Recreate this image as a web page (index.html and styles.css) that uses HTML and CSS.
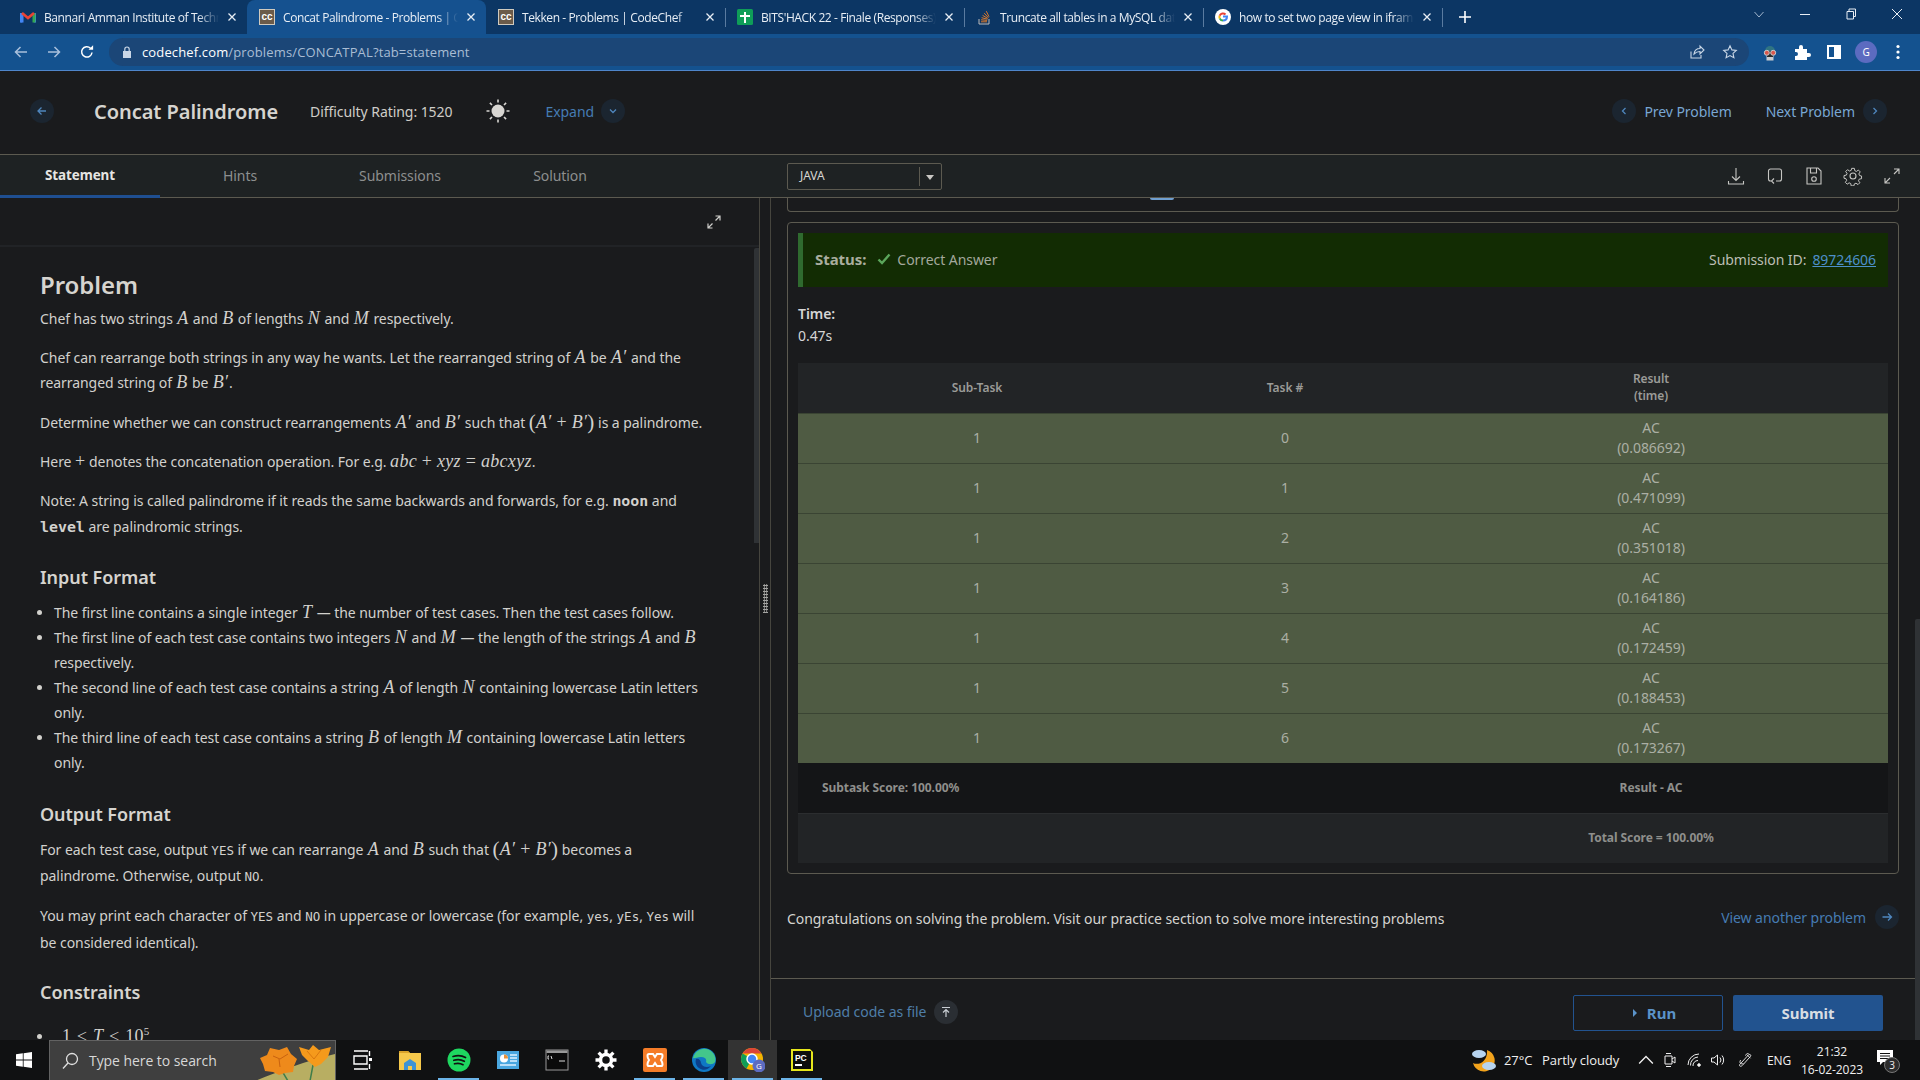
FILE: index.html
```html
<!DOCTYPE html>
<html lang="en">
<head>
<meta charset="utf-8">
<title>Concat Palindrome</title>
<link rel="stylesheet" href="styles.css">
</head>
<body>
<header class="tabstrip">
  <div class="tab"><svg class="fav" viewBox="0 0 16 16"><path d="M1 13.500V4M15 13.500V4" stroke="#4285f4" stroke-width="2.400"/><path d="M14 4v9.500" stroke="#34a853" stroke-width="3"/><path d="M2 13.500V4" stroke="#4285f4" stroke-width="3"/><path d="M2 4l6 5 6-5" stroke="#ea4335" stroke-width="2.600" fill="none"/></svg><span class="tab-title">Bannari Amman Institute of Technology</span><svg class="close" viewBox="0 0 10 10"><path d="M1.5 1.5l7 7M8.500 1.500l-7 7"/></svg></div>
  <div class="tab active"><span class="fav cc">cc</span><span class="tab-title">Concat Palindrome - Problems | CodeChef</span><svg class="close" viewBox="0 0 10 10"><path d="M1.5 1.5l7 7M8.500 1.500l-7 7"/></svg></div>
  <div class="tab sep"><span class="fav cc">cc</span><span class="tab-title">Tekken - Problems | CodeChef</span><svg class="close" viewBox="0 0 10 10"><path d="M1.5 1.5l7 7M8.500 1.500l-7 7"/></svg></div>
  <div class="tab sep"><svg class="fav" viewBox="0 0 16 16"><rect width="16" height="16" rx="1.500" fill="#0f9d58"/><path d="M7 3h2v3h4v2H9v6H7V8H3V6h4z" fill="#fff"/></svg><span class="tab-title">BITS'HACK 22 - Finale (Responses)</span><svg class="close" viewBox="0 0 10 10"><path d="M1.5 1.5l7 7M8.500 1.500l-7 7"/></svg></div>
  <div class="tab sep"><svg class="fav" viewBox="0 0 16 16"><path d="M3 10v5h10v-5" fill="none" stroke="#bcbbbb"/><path d="M5 12.800h6M5.100 10.800l6 .6M5.600 8.700l5.800 1.500M6.600 6.400l5.200 3M8.200 4.200l4.200 4.400M10.300 2.200l2.700 5.500" stroke="#f48024" stroke-width=".9" fill="none"/></svg><span class="tab-title">Truncate all tables in a MySQL database</span><svg class="close" viewBox="0 0 10 10"><path d="M1.5 1.5l7 7M8.500 1.500l-7 7"/></svg></div>
  <div class="tab sep"><svg class="fav" viewBox="0 0 16 16"><circle cx="8" cy="8" r="8" fill="#fff"/><path d="M8 7.500h4c0 2.400-1.700 4-4 4" fill="none" stroke="#4285f4" stroke-width="2"/><path d="M8 11.500A3.600 3.600 0 0 1 4.700 9.300" fill="none" stroke="#34a853" stroke-width="2"/><path d="M4.700 9.400a3.600 3.600 0 0 1 0-2.800" fill="none" stroke="#fbbc04" stroke-width="2"/><path d="M4.700 6.700A3.600 3.600 0 0 1 10.500 5.400" fill="none" stroke="#ea4335" stroke-width="2"/></svg><span class="tab-title">how to set two page view in iframe</span><svg class="close" viewBox="0 0 10 10"><path d="M1.5 1.5l7 7M8.500 1.500l-7 7"/></svg></div>
  <div class="newtab sep"><svg viewBox="0 0 14 14"><path d="M7 1v12M1 7h12"/></svg></div>
  <div class="winctl">
    <svg class="wc wc-s" viewBox="0 0 12 12"><path d="M1.500 4L6 9l4.500-5"/></svg>
    <svg class="wc" viewBox="0 0 12 12"><path d="M1 6.500h10"/></svg>
    <svg class="wc" viewBox="0 0 12 12"><path d="M2 3.500h6.500V11H2zM4 3.500V1h6.500v7.500H8.500"/></svg>
    <svg class="wc" viewBox="0 0 12 12"><path d="M1 1l10 10M11 1L1 11"/></svg>
  </div>
</header>
<nav class="toolbar">
  <svg class="tb tb-dim" viewBox="0 0 16 16"><path d="M14 8H2.500M7.500 3l-5 5 5 5"/></svg>
  <svg class="tb tb-dim" viewBox="0 0 16 16"><path d="M2 8h11.500M8.500 3l5 5-5 5"/></svg>
  <svg class="tb" viewBox="0 0 16 16"><path d="M13 8.500A5.200 5.200 0 1 1 11.500 4.200"/><path class="fill" d="M9.500 5.800h4.600V1.200z"/></svg>
  <div class="omnibox">
    <svg class="lock" viewBox="0 0 10 12"><path d="M1 5h8v7H1z" fill="#c9d6e6"/><path d="M2.800 5V3.200a2.200 2.200 0 0 1 4.400 0V5" fill="none" stroke="#c9d6e6" stroke-width="1.200"/></svg>
    <span class="url"><b>codechef.com</b>/problems/CONCATPAL?tab=statement</span>
    <span class="omni-icons">
      <svg class="tb tb-sm" viewBox="0 0 16 16"><path d="M2 7.500V14h10v-3"/><path d="M5 10c.5-3.500 3-5.500 6-5.500V2l4 4-4 4V7.500C8.500 7.500 6.500 8.500 5 10z"/></svg>
      <svg class="tb tb-sm" viewBox="0 0 16 16"><path d="M8 1.800l1.900 4.100 4.400.5-3.300 3 .9 4.400L8 11.600l-3.900 2.200.9-4.400-3.300-3 4.400-.5z"/></svg>
    </span>
  </div>
  <div class="ext-icons">
    <svg class="ext" viewBox="0 0 18 18"><path d="M4 8a5 5 0 0 1 10 0z" fill="#2f7482"/><rect x="5.500" y="13" width="7" height="4.500" fill="#c9ccd0"/><rect x="6" y="8" width="6" height="6" fill="#2a2a2a"/><circle cx="5.800" cy="9.800" r="2.500" fill="#d9574c" stroke="#c8ccd0"/><circle cx="12.200" cy="9.800" r="2.500" fill="#d9574c" stroke="#c8ccd0"/></svg>
    <svg class="ext" viewBox="0 0 18 18"><path fill="#fff" d="M2 6h4V4a2 2 0 0 1 4 0v2h4v4h2a2 2 0 0 1 0 4h-2v3H2v-4h1a2 2 0 0 0 0-4H2z"/></svg>
    <svg class="ext" viewBox="0 0 18 18"><path fill="#fff" d="M2 2h14v14H2zm2 2v10h5V4z"/></svg>
    <span class="avatar">G</span>
    <svg class="ext" viewBox="0 0 18 18"><circle cx="9" cy="3.500" r="1.600" fill="#fff"/><circle cx="9" cy="9" r="1.600" fill="#fff"/><circle cx="9" cy="14.500" r="1.600" fill="#fff"/></svg>
  </div>
</nav>
<section class="pagehead">
  <span class="roundbtn back"><svg viewBox="0 0 12 12"><path d="M10 6H2M5.500 2.500L2 6l3.500 3.500"/></svg></span>
  <h1 class="title">Concat Palindrome</h1>
  <span class="rating">Difficulty Rating: 1520</span>
  <svg class="sun" viewBox="0 0 24 24"><circle cx="12" cy="12" r="6.500" fill="#d8d6d2"/><path d="M12 .5v3M12 20.500v3M.5 12h3M20.500 12h3M3.900 3.900L6 6M18 18l2.100 2.100M3.900 20.100L6 18M18 6l2.100-2.100" stroke="#d8d6d2" stroke-width="1.600"/></svg>
  <span class="link expand">Expand</span>
  <span class="roundbtn"><svg viewBox="0 0 12 12"><path d="M3 4.500L6 7.500 9 4.500"/></svg></span>
  <div class="pager">
    <span class="roundbtn"><svg viewBox="0 0 12 12"><path d="M7.500 3L4.500 6l3 3"/></svg></span>
    <span class="pager-link">Prev Problem</span>
    <span class="pager-link next">Next Problem</span>
    <span class="roundbtn"><svg viewBox="0 0 12 12"><path d="M4.500 3l3 3-3 3"/></svg></span>
  </div>
</section>
<section class="subnav">
  <div class="subtabs">
    <span class="subtab current">Statement</span>
    <span class="subtab">Hints</span>
    <span class="subtab">Submissions</span>
    <span class="subtab">Solution</span>
  </div>
  <div class="langselect"><span class="lang">JAVA</span><span class="caret"></span></div>
  <div class="editor-icons">
    <svg viewBox="0 0 20 20"><path d="M10 2v12M6 10.500l4 4 4-4M2.500 15v3h15v-3"/></svg>
    <svg viewBox="0 0 20 20"><path d="M11 15h3.500a2 2 0 0 0 2-2V5a2 2 0 0 0-2-2h-9a2 2 0 0 0-2 2v8a2 2 0 0 0 2 2h1M9 12.500L6.500 15 9 17.500"/></svg>
    <svg viewBox="0 0 20 20"><path d="M3 2h11l3 3v13H3zM6.500 2v5h6V2"/><circle cx="10" cy="13" r="2.300"/></svg>
    <svg viewBox="0 0 20 20"><circle cx="10" cy="10" r="3"/><path d="M8.500 1.500h3l.5 2.600 1.800.8 2.200-1.500 2 2-1.500 2.300.8 1.800 2.200.500v3l-2.600.5-.8 1.800 1.500 2.200-2 2-2.300-1.500-1.800.8-.5 2.200h-3l-.5-2.600-1.800-.8-2.200 1.500-2-2 1.500-2.300-.8-1.800-2.200-.5v-3l2.600-.5.8-1.800-1.500-2.200 2-2 2.300 1.500 1.800-.8z" transform="translate(1 1) scale(.9)"/></svg>
    <svg viewBox="0 0 20 20"><path d="M12 3h5v5M17 3l-5 5M8 17H3v-5M3 17l5-5"/></svg>
  </div>
</section>
<main class="workspace">
  <article class="statement">
    <div class="statement-head"><svg class="expand-mini" viewBox="0 0 16 16"><path d="M9.500 2H14v4.500M14 2L9.500 6.500M6.500 14H2V9.500M2 14l4.500-4.500"/></svg></div>
    <div class="statement-body">
      <h2>Problem</h2>
      <p>Chef has two strings <i class="m">A</i> and <i class="m">B</i> of lengths <i class="m">N</i> and <i class="m">M</i> respectively.</p>
      <p>Chef can rearrange both strings in any way he wants. Let the rearranged string of <i class="m">A</i> be <i class="m">A′</i> and the rearranged string of <i class="m">B</i> be <i class="m">B′</i>.</p>
      <p>Determine whether we can construct rearrangements <i class="m">A′</i> and <i class="m">B′</i> such that <span class="m"><span class="paren">(</span><i>A′</i> + <i>B′</i><span class="paren">)</span></span> is a palindrome.</p>
      <p>Here <span class="m">+</span> denotes the concatenation operation. For e.g. <span class="m"><i>abc</i> + <i>xyz</i> = <i>abcxyz</i></span>.</p>
      <p>Note: A string is called palindrome if it reads the same backwards and forwards, for e.g. <code class="strong">noon</code> and <code class="strong">level</code> are palindromic strings.</p>
      <h3>Input Format</h3>
      <ul>
        <li>The first line contains a single integer <i class="m">T</i> — the number of test cases. Then the test cases follow.</li>
        <li>The first line of each test case contains two integers <i class="m">N</i> and <i class="m">M</i> — the length of the strings <i class="m">A</i> and <i class="m">B</i> respectively.</li>
        <li>The second line of each test case contains a string <i class="m">A</i> of length <i class="m">N</i> containing lowercase Latin letters only.</li>
        <li>The third line of each test case contains a string <i class="m">B</i> of length <i class="m">M</i> containing lowercase Latin letters only.</li>
      </ul>
      <h3>Output Format</h3>
      <p>For each test case, output <code>YES</code> if we can rearrange <i class="m">A</i> and <i class="m">B</i> such that <span class="m"><span class="paren">(</span><i>A′</i> + <i>B′</i><span class="paren">)</span></span> becomes a palindrome. Otherwise, output <code>NO</code>.</p>
      <p>You may print each character of <code>YES</code> and <code>NO</code> in uppercase or lowercase (for example, <code>yes</code>, <code>yEs</code>, <code>Yes</code> will be considered identical).</p>
      <h3>Constraints</h3>
      <ul class="limits">
        <li><span class="m ineq">1 ≤ <i>T</i> ≤ 10<sup>5</sup></span></li>
      </ul>
    </div>
    <span class="v-thumb left-thumb"></span>
  </article>
  <div class="divider"><span class="grip"></span></div>
  <section class="results-pane">
    <div class="results">
      <div class="prev-card"><span class="prev-dot"></span></div>
      <div class="card">
        <div class="status">
          <span class="status-label">Status:</span>
          <svg class="check" viewBox="0 0 14 12"><path d="M1.500 6.500l3.500 3.500 7.500-8.500"/></svg>
          <span class="status-value">Correct Answer</span>
          <span class="subid">Submission ID:<a href="#">89724606</a></span>
        </div>
        <div class="time"><strong>Time:</strong><span>0.47s</span></div>
        <table class="subtasks">
          <colgroup><col class="c1"><col class="c2"><col class="c3"></colgroup>
          <thead><tr><th>Sub-Task</th><th>Task #</th><th>Result<br>(time)</th></tr></thead>
          <tbody>
            <tr><td>1</td><td>0</td><td>AC<br>(0.086692)</td></tr>
            <tr><td>1</td><td>1</td><td>AC<br>(0.471099)</td></tr>
            <tr><td>1</td><td>2</td><td>AC<br>(0.351018)</td></tr>
            <tr><td>1</td><td>3</td><td>AC<br>(0.164186)</td></tr>
            <tr><td>1</td><td>4</td><td>AC<br>(0.172459)</td></tr>
            <tr><td>1</td><td>5</td><td>AC<br>(0.188453)</td></tr>
            <tr><td>1</td><td>6</td><td>AC<br>(0.173267)</td></tr>
          </tbody>
          <tfoot>
            <tr class="subscore"><td colspan="2">Subtask Score: 100.00%</td><td>Result - AC</td></tr>
            <tr class="total"><td colspan="2"></td><td>Total Score = 100.00%</td></tr>
          </tfoot>
        </table>
      </div>
      <div class="congrats">
        <span>Congratulations on solving the problem. Visit our practice section to solve more interesting problems</span>
        <span class="another"><span class="link">View another problem</span><span class="roundbtn"><svg viewBox="0 0 12 12"><path d="M1.500 6h9M7 2.500L10.500 6 7 9.500"/></svg></span></span>
      </div>
    </div>
    <div class="actionbar">
      <span class="link upload">Upload code as file</span>
      <span class="roundbtn up"><svg viewBox="0 0 12 12"><path d="M2 1.500h8M6 11V3.500M3 6.500l3-3 3 3"/></svg></span>
      <button class="btn run"><svg viewBox="0 0 6 10"><path d="M1 1l4 4-4 4z"/></svg>Run</button>
      <button class="btn submit">Submit</button>
    </div>
    <span class="v-thumb right-thumb"></span>
  </section>
</main>
<footer class="taskbar">
  <div class="startbtn"><svg viewBox="0 0 16 16"><path fill="#fff" d="M0 2.300l6.800-1v6.300H0zM7.600 1.200L16 0v7.600H7.600zM0 8.400h6.800v6.300L0 13.700zM7.600 8.400H16V16l-8.400-1.200z"/></svg></div>
  <div class="searchbox">
    <svg class="mag" viewBox="0 0 18 18"><circle cx="11" cy="7" r="5.500"/><path d="M7 11l-5 5.500"/></svg>
    <span>Type here to search</span>
    <svg class="poppy" viewBox="0 0 80 40"><path d="M0 40c20-8 50-20 80-27v27z" fill="#b8ae62"/><path d="M27 30l6 10M58 24l-3 16" stroke="#3f7d4a" stroke-width="1.500"/><path d="M5 17l7-3 3-7 9 2 8-3 4 7 6 5-3 7-1 6-8 1-6 2-6-3-8-1-2-7z" fill="#ee8a1b"/><path d="M18 15l7 3 8-5M24 18l1 8" stroke="#c9620f" fill="none"/><path d="M44 6l10 3 4-5 6 5 12-3-3 10-7 7-6 3-7-6-6-6z" fill="#f59a1c"/><path d="M52 10l7 8 7-9" stroke="#d9770f" fill="none"/></svg>
  </div>
  <div class="task"><svg viewBox="0 0 24 24"><path d="M5 3h14M5 21h14M5 8h13v8H5zM20.500 3v5M20.500 16v5" fill="none" stroke="#fff" stroke-width="1.400"/><rect x="20" y="10" width="3" height="3" fill="#fff"/></svg></div>
  <div class="task"><svg viewBox="0 0 24 24"><path d="M1 3h9l2 2h11v17H1z" fill="#f5c84b"/><path d="M1 3h9l2 2H1z" fill="#d9a32a"/><path d="M6 22v-7l6-4 6 4v7h-4v-4h-4v4z" fill="#3e93d3"/></svg></div>
  <div class="task on"><svg viewBox="0 0 24 24"><circle cx="12" cy="12" r="11.500" fill="#1ed760"/><path d="M6 8.500c4-1.200 9-1 12.500 1M6.800 12.300c3.500-1 7.500-.7 10.500 1M7.500 15.800c3-.8 6-.6 8.500.9" stroke="#111" stroke-width="1.700" fill="none" stroke-linecap="round"/></svg></div>
  <div class="task"><svg viewBox="0 0 24 24"><rect x="1" y="3" width="22" height="18" fill="#4aa7e0"/><circle cx="8" cy="10.500" r="4" fill="#fff"/><path d="M8 10.500V6.500a4 4 0 0 1 4 4z" fill="#e8913a"/><path d="M14 7h7M14 10h7M14 13h7M4 17h16" stroke="#dff2ff" stroke-width="1.500"/></svg></div>
  <div class="task"><svg viewBox="0 0 24 24"><rect x="1" y="2" width="22" height="20" fill="#0b0b0b" stroke="#999"/><rect x="1.500" y="2.500" width="21" height="2.500" fill="#999"/><path d="M4 8H3v3h1M6 8l1 3M14 13h6" stroke="#ddd" fill="none"/></svg></div>
  <div class="task"><svg viewBox="0 0 24 24"><circle cx="12" cy="12" r="5.500" fill="none" stroke="#fff" stroke-width="3.500"/><path d="M12 1.500v4M12 18.500v4M1.500 12h4M18.500 12h4M4.600 4.600l2.800 2.800M16.600 16.600l2.800 2.800M4.600 19.400l2.800-2.800M16.600 7.400l2.800-2.800" stroke="#fff" stroke-width="3.300"/></svg></div>
  <div class="task on"><svg viewBox="0 0 24 24"><rect width="24" height="24" rx="2" fill="#f57c28"/><path d="M6 6h4l2 3 2-3h4c2 0 2 3 0 6 2 3 2 6 0 6h-4l-2-3-2 3H6c-2 0-2-3 0-6-2-3-2-6 0-6z" fill="none" stroke="#fff" stroke-width="2"/></svg></div>
  <div class="task on"><svg viewBox="0 0 24 24"><circle cx="12" cy="12" r="12" fill="#0f78c4"/><path d="M1 10C3 2 12-2 19 3c4 3 5 8 4 11-2 3-7 3-9 0 1-3-1-5-5-5-4 0-7 2-8 1z" fill="#43c68b"/><path d="M9 15c1 4 6 5 10 3-3 4-8 5-12 2-3-2-4-6-3-9 2-1 5 1 5 4z" fill="#0b3f8a"/></svg></div>
  <div class="task on active"><svg viewBox="0 0 24 24"><circle cx="11" cy="11" r="11" fill="#f4b400"/><path d="M11 11L5.500 20.500A11 11 0 0 1 1.500 5.500z" fill="#0f9d58"/><path d="M1.500 5.500A11 11 0 0 1 20.500 5.500H11z" fill="#db4437"/><circle cx="11" cy="11" r="5" fill="#4285f4" stroke="#fff" stroke-width="1.500"/><circle cx="18" cy="18" r="6.500" fill="#5c6bc0"/><text x="18" y="21" font-size="8" fill="#fff" text-anchor="middle" font-family="Open Sans">G</text></svg></div>
  <div class="task on"><svg viewBox="0 0 24 24"><path d="M1 1h19l3 3v19H1z" fill="#e6e61c"/><rect x="3" y="3" width="18" height="18" fill="#0d0d0d"/><rect x="5" y="16" width="7" height="2" fill="#fff"/><text x="5" y="13" font-size="8.500" font-weight="700" fill="#fff" font-family="Liberation Sans">PC</text></svg></div>
  <div class="tray">
    <svg class="weather" viewBox="0 0 26 26"><path d="M16 3a11 11 0 1 1-14 13c6 3 15-2 14-13z" fill="#f2a31c"/><ellipse cx="8" cy="7" rx="7" ry="4" fill="#b7d4ef"/><ellipse cx="18" cy="19" rx="7" ry="4" fill="#b7d4ef"/></svg>
    <span class="temp">27°C</span>
    <span class="sky">Partly cloudy</span>
    <svg class="ti chev" viewBox="0 0 14 14"><path d="M1 10l6-6 6 6"/></svg>
    <svg class="ti" viewBox="0 0 16 16"><path d="M3 4h7v8H3zM10 7l3-2v6l-3-2M4 1.500h5M4 14.500h5"/></svg>
    <svg class="ti" viewBox="0 0 16 16"><path d="M2 13a11 11 0 0 1 11-11M4.500 13.500A8 8 0 0 1 12 5M7 14a5 5 0 0 1 5-5.500"/><circle cx="13" cy="13" r="1.300" fill="#fff"/></svg>
    <svg class="ti" viewBox="0 0 16 16"><path d="M1.500 6v4h2.500l3.500 3V3L4 6zM10 5.500a4 4 0 0 1 0 5M12 3.500a7 7 0 0 1 0 9"/></svg>
    <svg class="ti pen" viewBox="0 0 18 18"><path d="M2 14c-1 2 1 3 3 1L14 5c1-1 0-3-2-2zM10 3l4 4M8 4c2-2 3-3 4-2M3 9c-2 3 0 5 3 4"/></svg>
    <span class="eng">ENG</span>
    <span class="clock">21:32<br>16-02-2023</span>
    <span class="notif"><svg viewBox="0 0 18 18"><path fill="#fff" d="M1 1h16v12H7l-3 3v-3H1z"/><path d="M4 4.500h10M4 7h10M4 9.500h8" stroke="#111" stroke-width="1"/></svg><b>3</b></span>
  </div>
</footer>
</body>
</html>
```

FILE: styles.css
```css
* { box-sizing: border-box; }
html, body { height: 100%; }
body {
  margin: 0;
  width: 1920px;
  height: 1080px;
  overflow: hidden;
  display: flex;
  flex-direction: column;
  background: #1a1b1d;
  color: #d2d1cd;
  font-family: "Noto Sans", "Open Sans", sans-serif;
  font-size: 14px;
  letter-spacing: -0.06px;
}
svg { display: block; flex: none; }

/* Browser chrome */
.tabstrip {
  height: 34px;
  flex: none;
  display: flex;
  padding-left: 8px;
  background: #0c3664;
  font-family: "Open Sans", sans-serif;
  font-size: 12px;
  letter-spacing: -0.4px;
  color: #e8eef5;
}
.tab {
  width: 239px;
  flex: none;
  display: flex;
  align-items: center;
  padding: 0 10px 0 12px;
  gap: 8px;
  position: relative;
}
.tab.sep::before, .newtab.sep::before {
  content: "";
  position: absolute;
  left: 0;
  top: 8px;
  height: 19px;
  width: 1px;
  background: #5a7ba0;
}
.tab.active + .tab.sep::before { display: none; }
.tab.active { background: #15518f; border-radius: 8px 8px 0 0; }
.fav { width: 16px; height: 16px; flex: none; }
.cc {
  background: #6b5b4a;
  color: #fff;
  font: 700 10px/15px "Liberation Sans", sans-serif;
  letter-spacing: 0;
  text-align: center;
  outline: 1px solid #cfcabf;
  outline-offset: -1px;
}
.tab-title {
  flex: 1;
  white-space: nowrap;
  overflow: hidden;
  -webkit-mask-image: linear-gradient(to right, #000 88%, transparent);
  mask-image: linear-gradient(to right, #000 88%, transparent);
}
.close { width: 10px; height: 10px; stroke: #e8eef5; stroke-width: 1.3; fill: none; }
.newtab {
  position: relative;
  width: 46px;
  display: flex;
  align-items: center;
  justify-content: center;
}
.newtab svg { width: 14px; height: 14px; stroke: #fff; stroke-width: 1.6; fill: none; }
.winctl { margin-left: auto; display: flex; padding: 8px 17px 0 0; gap: 34px; }
.wc { width: 12px; height: 12px; stroke: #e8eef5; fill: none; }
.wc-s { stroke: #9fb4cc; }

.toolbar {
  height: 37px;
  flex: none;
  display: flex;
  align-items: center;
  background: #14528f;
  border-bottom: 1px solid #4f86cb;
  padding: 0 0 1px 13px;
  gap: 17px;
}
.tb { width: 16px; height: 16px; fill: none; stroke: #fff; stroke-width: 1.5; }
.tb .fill { fill: #fff; stroke: none; }
.tb-dim { stroke: #a9c0dc; }
.tb-sm { stroke: #c8d6e6; stroke-width: 1.1; }
.omnibox {
  margin-left: -3px;
  width: 1640px;
  height: 28px;
  flex: none;
  display: flex;
  align-items: center;
  background: #1b4677;
  border-radius: 14px;
  padding: 0 11px 0 13px;
  font-family: "Open Sans", sans-serif;
  font-size: 13px;
  letter-spacing: 0.14px;
  color: #a9bdd4;
}
.lock { width: 10px; height: 12px; margin-right: 10px; }
.url b { font-weight: 400; color: #fff; }
.omni-icons { margin-left: auto; display: flex; gap: 17px; }
.ext-icons { display: flex; align-items: center; gap: 14px; margin-left: -5px; }
.ext { width: 18px; height: 18px; }
.avatar {
  width: 22px;
  height: 22px;
  border-radius: 50%;
  background: #5c6bc0;
  color: #fff;
  font-size: 10px;
  line-height: 22px;
  text-align: center;
  margin: 0 -2px;
}

/* Problem header */
.pagehead {
  height: 84px;
  flex: none;
  display: flex;
  align-items: center;
  padding: 0 33px 3px 30px;
  border-bottom: 1px solid #5c5a50;
}
.roundbtn {
  width: 24px;
  height: 24px;
  flex: none;
  border-radius: 50%;
  background: #1b2530;
  display: flex;
  align-items: center;
  justify-content: center;
}
.roundbtn svg { width: 12px; height: 12px; fill: none; stroke: #4f86bd; stroke-width: 1.3; }
.title { margin: 0 32px 0 40px; font-size: 20px; font-weight: 600; color: #d6d4cf; }
.rating { color: #cfcdc8; }
.sun { width: 24px; height: 24px; margin: 0 35px 0 34px; }
.link { color: #467cb3; }
.expand { margin-right: 7px; }
.pager { margin-left: auto; display: flex; align-items: center; color: #79a7d3; }
.pager-link { margin-left: 8px; }
.pager-link.next { margin: 0 8px 0 34px; }

.subnav {
  height: 43px;
  flex: none;
  display: flex;
  align-items: center;
  background: #1e2223;
  border-bottom: 1px solid #5c5a50;
}
.subtabs { display: flex; align-self: stretch; width: 787px; }
.subtab {
  width: 160px;
  display: flex;
  align-items: center;
  justify-content: center;
  color: #8d8f8f;
  font-size: 14px;
  padding-bottom: 1px;
}
.subtab.current {
  color: #e6e5e2;
  font-size: 13.400px;
  font-weight: 700;
  padding-bottom: 1px;
  margin-bottom: -1px;
  border-bottom: 3px solid #1f4f91;
}
.langselect {
  width: 155px;
  height: 27px;
  border: 1px solid #5c5a50;
  border-radius: 2px;
  display: flex;
  align-items: center;
  padding: 0 0 2px 12px;
  font-size: 12px;
  color: #d6d5d1;
  position: relative;
}
.caret {
  position: absolute;
  right: 1px;
  top: 3px;
  bottom: 3px;
  width: 21px;
  border-left: 1px solid #5c5a50;
}
.caret::after {
  content: "";
  position: absolute;
  left: 6px;
  top: 8px;
  border: 4px solid transparent;
  border-top: 5px solid #c9c8c4;
  border-bottom: 0;
}
.editor-icons { margin-left: auto; display: flex; gap: 19px; padding-right: 18px; }
.editor-icons svg { width: 20px; height: 20px; fill: none; stroke: #c6c6c3; stroke-width: 1.1; }

/* Work area */
.workspace { flex: 1; min-height: 0; display: flex; }
.statement {
  width: 760px;
  flex: none;
  position: relative;
  overflow: hidden;
  border-right: 1px solid #46453e;
}
.statement-head {
  height: 49px;
  display: flex;
  justify-content: flex-end;
  padding: 16px 37px 0 0;
  border-bottom: 2px solid #212326;
}
.expand-mini { width: 16px; height: 16px; fill: none; stroke: #cfcfcc; stroke-width: 1.2; }
.statement-body { padding: 21px 54px 0 40px; line-height: 25.2px; }
.statement-body h2 { margin: 0 0 4px; font-size: 24px; line-height: 34px; font-weight: 600; color: #d6d4cf; }
.statement-body h3 { margin: 25px 0 11px; font-size: 18px; line-height: 24px; font-weight: 600; color: #d6d4cf; }
.statement-body p { margin: 0 0 14px; }
.statement-body ul { margin: 0 0 26.600px; padding-left: 14px; line-height: 25px; }
.statement-body .limits { margin-top: 20px; }
.m { font-family: "Liberation Serif", serif; font-size: 18px; line-height: 1; letter-spacing: 0.3px; }
i.m { margin: 0 .8px; }
.paren { font-size: 21px; line-height: 0; font-weight: 400; vertical-align: -1px; }
.m sup { font-size: 11px; line-height: 0; }
.ineq { margin-left: 8px; word-spacing: 1px; }
code { font-family: "DejaVu Sans Mono", monospace; font-size: 12.500px; letter-spacing: 0; }
code.strong { font-size: 14.900px; font-weight: 700; }
.v-thumb { position: absolute; width: 5px; background: #2f3235; border-radius: 2px 0 0 0; }
.left-thumb { right: 0; top: 50px; height: 295px; }
.right-thumb { right: 0; top: 421px; bottom: 0; }
.divider {
  width: 10px;
  flex: none;
  display: flex;
  align-items: center;
  justify-content: center;
  padding-bottom: 42px;
}
.grip {
  width: 5px;
  height: 29px;
  background: radial-gradient(circle, #a4a4a2 1px, transparent 1.200px) 0 0 / 2.500px 3px;
}
.results-pane {
  flex: 1;
  min-width: 0;
  position: relative;
  display: flex;
  flex-direction: column;
  border-left: 1px solid #46453e;
}
.results { flex: 1; min-height: 0; overflow: hidden; padding: 0 21px 0 16px; }
.prev-card {
  height: 14px;
  border: 1px solid #5c5a50;
  border-top: 0;
  border-radius: 0 0 4px 4px;
  margin-bottom: 10px;
}
.prev-dot { display: block; width: 24px; height: 2px; margin-left: 362px; background: #6f9fd0; border-radius: 0 0 12px 12px; }
.card { height: 652px; border: 1px solid #5c5a50; border-radius: 4px; padding: 10px; }
.status {
  height: 54px;
  display: flex;
  align-items: center;
  background: #122c03;
  border-left: 5px solid #2f6a2f;
  padding: 0 12px 2px;
  color: #a3a89c;
}
.status-label { font-size: 15px; font-weight: 700; margin-right: 11px; color: #a9ad9f; }
.check { width: 14px; height: 12px; fill: none; stroke: #5ba65b; stroke-width: 2.400; margin-right: 6px; }
.subid { margin-left: auto; color: #bcbeb5; }
.subid a { margin-left: 6px; color: #4d8fc9; }
.time { display: flex; flex-direction: column; margin: 16px 0; line-height: 22px; color: #d5d5d5; }
.time strong { font-weight: 600; }
.subtasks {
  width: 1090px;
  table-layout: fixed;
  border-collapse: separate;
  border-spacing: 0;
  font-size: 14px;
  line-height: 20px;
  text-align: center;
}
.c1 { width: 358px; }
.c2 { width: 258px; }
.c3 { width: 474px; }
.subtasks th {
  height: 50px;
  padding: 0 0 2px;
  background: #222426;
  color: #9b9b98;
  font-size: 12px;
  font-weight: 600;
  line-height: 17px;
}
.subtasks tbody td {
  height: 50px;
  padding: 0 0 2px;
  background: #4f5b43;
  color: #abafa4;
  border-top: 1px solid #3a4433;
}
.subtasks tfoot td { height: 50px; padding: 0; font-size: 12px; font-weight: 700; color: #8f8f8c; }
.subscore td { background: #141517; }
.subtasks .subscore td:first-child { text-align: left; padding-left: 24px; }
.subtasks .total td { background: #222426; border-top: 1px solid #2b2d2f; padding-bottom: 2px; }
.congrats {
  margin-top: 30px;
  height: 28px;
  display: flex;
  align-items: center;
  justify-content: space-between;
  color: #d5d4d0;
}
.another { display: flex; align-items: center; gap: 9px; margin-top: -2px; }
.actionbar {
  height: 62px;
  flex: none;
  display: flex;
  align-items: flex-start;
  padding: 16px 37px 0 32px;
  border-top: 1px solid #5c5a50;
}
.upload { line-height: 33px; color: #4f7ea8; }
.up { margin: 5px 0 0 8px; background: #2a2e33; }
.up svg { stroke: #c9ced4; stroke-width: 1.200; }
.btn {
  width: 150px;
  height: 36px;
  border-radius: 2px;
  font: 700 14px "Noto Sans", sans-serif;
  cursor: pointer;
}
.run {
  margin-left: auto;
  display: flex;
  align-items: center;
  justify-content: center;
  gap: 9px;
  padding-left: 18px;
  font-size: 15px;
  background: transparent;
  border: 1px solid #22538f;
  color: #5b93c9;
}
.run svg { width: 6px; height: 10px; fill: #5b93c9; }
.submit { margin-left: 10px; background: #22538f; border: 0; color: #d8dde3; font-size: 15px; }

/* Windows taskbar */
.taskbar {
  height: 40px;
  flex: none;
  display: flex;
  background: #101112;
  color: #f0f0f0;
}
.startbtn { width: 49px; display: flex; align-items: center; justify-content: center; padding-right: 1px; }
.startbtn svg { width: 16px; height: 16px; }
.searchbox {
  width: 287px;
  display: flex;
  align-items: center;
  gap: 10px;
  padding-left: 11px;
  background: #3f3f3f;
  border: 1px solid #626262;
  border-bottom: 0;
  font-family: "Open Sans", sans-serif;
  font-size: 14px;
  color: #d8d8d8;
  position: relative;
  overflow: hidden;
}
.mag { width: 18px; height: 18px; fill: none; stroke: #e0e0e0; stroke-width: 1.300; }
.poppy { position: absolute; right: 0; top: 0; width: 80px; height: 40px; }
.task {
  width: 49px;
  display: flex;
  align-items: center;
  justify-content: center;
  border-bottom: 2px solid transparent;
  padding-top: 2px;
}
.task svg { width: 24px; height: 24px; }
.task.on { position: relative; }
.task.on::after {
  content: "";
  position: absolute;
  left: 4px;
  right: 4px;
  bottom: -2px;
  height: 2px;
  background: #6cb4e8;
}
.task.active { background: #333; }
.tray { margin-left: auto; display: flex; align-items: center; font-family: "Open Sans", sans-serif; font-size: 13px; }
.weather { width: 26px; height: 26px; margin-right: 7px; }
.temp { width: 38px; }
.sky { width: 90px; }
.ti { width: 16px; height: 16px; margin-right: 8px; fill: none; stroke: #f0f0f0; stroke-width: 1; }
.chev { margin: 0 8px 0 6px; stroke-width: 1.200; }
.pen { margin: 0 13px 0 4px; }
.eng { font-size: 12px; width: 27px; }
.clock { width: 76px; margin-right: 2px; text-align: center; font-size: 12px; line-height: 18px; padding-top: 1px; }
.notif { width: 48px; position: relative; display: block; height: 22px; }
.notif svg { width: 18px; height: 18px; margin-left: 4px; }
.notif b {
  position: absolute;
  left: 12px;
  top: 8px;
  width: 16px;
  height: 16px;
  border-radius: 50%;
  background: #2c2c2c;
  border: 1px solid #777;
  font-size: 10px;
  font-weight: 400;
  line-height: 14px;
  text-align: center;
}
```
